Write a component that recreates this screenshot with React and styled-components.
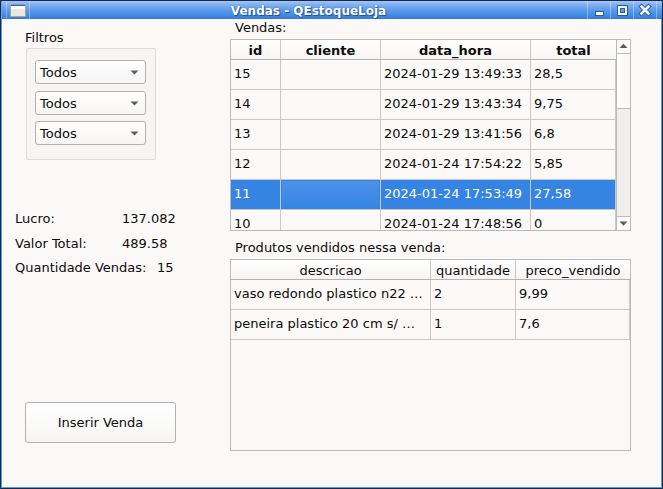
import React from 'react';
import styled, { createGlobalStyle } from 'styled-components';

const Global = createGlobalStyle`
  *, *::before, *::after { box-sizing: border-box; }
  body { margin: 0; background: #1b2c4c; font-family: "DejaVu Sans", sans-serif; font-size: 13px; color: #0c0c0c; overflow: hidden; }
`;

const Window = styled.div`
  width: 663px;
  height: 489px;
  display: flex;
  flex-direction: column;
  border: 1px solid #17294a;
  border-radius: 3px 3px 0 0;
  background: #faf9f7;
`;

const TitleBar = styled.header`
  flex: 0 0 18px;
  height: 18px;
  padding-left: 4px;
  display: flex;
  border-left: 1px solid #6aa5ec;
  background: linear-gradient(#a4c6f4 0, #7eaff0 4px, #5b9bea 9px, #4088e3 15px, #3a82de 17px, #2f73cd 18px);
  border-radius: 2px 2px 0 0;
`;

const TitleSlot = styled.div`
  flex: 0 0 ${(p) => p.$width}px;
  border-left: 1px solid #ffffff55;
  svg { display: block; }
`;

const TitleText = styled.h1`
  flex: 1;
  margin: 0;
  border-left: 1px solid #ffffff55;
  text-align: center;
  font-size: 12px;
  line-height: 20px;
  height: 18px;
  font-weight: bold;
  color: #fff;
  text-shadow: 0 0 1px #1d4e93, 1px 1px 1px #1d4e93;
  white-space: nowrap;
`;

const Body = styled.main`
  flex: 1;
  display: flex;
  border: solid #5b9be6;
  border-width: 0 1px 1px;
`;

const Sidebar = styled.section`
  width: 228px;
  display: flex;
  flex-direction: column;
  align-items: flex-start;
`;

const Label = styled.div`
  height: 17px;
  line-height: 17px;
  white-space: nowrap;
  margin: ${(p) => p.$margin || '0'};
`;

const FilterBox = styled.div`
  width: 130px;
  height: 112px;
  margin: 2px 0 0 24px;
  padding: 11px 0 0 8px;
  border: 1px solid #dddcda;
  border-radius: 2px;
  background: #f6f5f3;
`;

const Combo = styled.div`
  width: 111px;
  height: 24px;
  margin-bottom: ${(p) => p.$gap}px;
  padding: 1px 6px 0 4px;
  display: flex;
  align-items: center;
  justify-content: space-between;
  border: 1px solid #b1b1af;
  border-radius: 3px;
  background: linear-gradient(#fff, #f6f5f4);
  line-height: 23px;
`;

const Stats = styled.dl`
  margin: 50px 0 0 13px;
  display: flex;
  flex-direction: column;
`;

const Stat = styled.div`
  display: flex;
  height: ${(p) => p.$height}px;
  line-height: 17px;
  dt { width: ${(p) => p.$label}px; white-space: nowrap; }
  dd { margin: 0; }
`;

const Button = styled.button`
  width: 151px;
  height: 41px;
  margin: 118px 0 0 23px;
  padding: 0;
  border: 1px solid #b1b1af;
  border-radius: 3px;
  background: linear-gradient(#fff, #f6f5f4);
  font: inherit;
  color: inherit;
`;

const Content = styled.section`
  width: 401px;
`;

const TableFrame = styled.div`
  width: 401px;
  height: 192px;
  display: flex;
  overflow: hidden;
  border: 1px solid #bcbbb9;
`;

const Grid = styled.div`
  flex: none;
  width: ${(p) => p.$width}px;
`;

const Row = styled.div`
  display: grid;
  grid-template-columns: ${(p) => p.$columns};
  height: 30px;
  color: ${(p) => (p.$selected ? '#fff' : 'inherit')};
`;

const HeadRow = styled(Row)`
  height: 20px;
  font-weight: ${(p) => (p.$bold ? 'bold' : 'normal')};
  background: linear-gradient(#fff, #f6f5f4);
  border-bottom: 1px solid #b4b3b1;
`;

const HeadCell = styled.div`
  border-right: ${(p) => (p.$last ? '0' : '1px solid #c9c8c6')};
  text-align: center;
  line-height: 21px;
  height: 19px;
`;

const Cell = styled.div`
  border-right: 1px solid #c9c8c6;
  border-bottom: 1px solid #c9c8c6;
  padding-left: 3px;
  line-height: 28px;
  white-space: pre;
  background: ${(p) => (p.$focus ? 'linear-gradient(#4b92e9, #3584e4)' : p.$selected ? '#3584e4' : 'transparent')};
  background-clip: padding-box;
  box-shadow: ${(p) => (p.$focus ? 'inset 0 0 0 1px #3983dc' : 'none')};
`;

const ScrollBar = styled.div`
  width: 14px;
  display: flex;
  flex-direction: column;
  border-left: 1px solid #bcbbb9;
  background: #efefed;
`;

const ScrollButton = styled.div`
  flex: 0 0 14px;
  background: #fdfdfd;
  border: solid #bcbbb9;
  border-width: ${(p) => (p.$down ? '1px 0 0' : '0 0 1px')};
  svg { display: block; }
`;

const ScrollThumb = styled.div`
  height: 55px;
  background: linear-gradient(90deg, #fff, #f8f7f6);
  border-bottom: 1px solid #bcbbb9;
`;

const ScrollTrack = styled.div`
  flex: 1;
`;

const WindowIcon = () => (
  <svg width="20" height="18">
    <rect x="4" y="3" width="14" height="12" fill="#e9e9e4" />
    <path d="M3.5 4v11.5h15V4" fill="none" stroke="#a9a89c" />
    <path d="M4 3h14v1H4z" fill="#7f9cc8" />
    <path d="M4 4h14v1H4z" fill="#3466ad" />
    <path d="M4 5h14v3H4z" fill="#fbfbfa" />
  </svg>
);

const MinimizeIcon = () => (
  <svg width="22" height="18">
    <rect x="7" y="10" width="9" height="5" fill="#245da8" />
    <rect x="8" y="11" width="7" height="3" fill="#fff" />
  </svg>
);

const MaximizeIcon = () => (
  <svg width="22" height="18">
    <rect x="6.5" y="4.5" width="10" height="10" fill="none" stroke="#245da8" />
    <rect x="8" y="6" width="7" height="7" fill="none" stroke="#fff" strokeWidth="2" />
    <rect x="9.5" y="7.5" width="4" height="4" fill="none" stroke="#245da8" />
  </svg>
);

const CloseIcon = () => (
  <svg width="22" height="18">
    <path d="M7.5 5.5l7 7M14.5 5.5l-7 7" stroke="#245da8" strokeWidth="4.4" strokeLinecap="square" />
    <path d="M7.5 5.5l7 7M14.5 5.5l-7 7" stroke="#fff" strokeWidth="2.6" strokeLinecap="square" />
  </svg>
);

const ComboArrow = () => (
  <svg width="9" height="5">
    <path d="M.5 .4h8L4.5 4.6z" fill="#5d5d5b" />
  </svg>
);

const ScrollArrow = ({ down }) => (
  <svg width="13" height="13">
    <path d={down ? 'M2.5 4.5h8l-4 4.2z' : 'M2.5 8h8l-4-4.2z'} fill="#5d5d5b" />
  </svg>
);

const salesColumns = '50px 100px 150px 85px';
const sales = [
  ['15', '', '2024-01-29 13:49:33', '28,5'],
  ['14', '', '2024-01-29 13:43:34', '9,75'],
  ['13', '', '2024-01-29 13:41:56', '6,8'],
  ['12', '', '2024-01-24 17:54:22', '5,85'],
  ['11', '', '2024-01-24 17:53:49', '27,58'],
  ['10', '', '2024-01-24 17:48:56', '0'],
];

const productColumns = '200px 85px 114px';
const products = [
  ['vaso redondo plastico n22 …', '2', '9,99'],
  ['peneira plastico 20 cm s/ …', '1', '7,6'],
];

function Table({ width, columns, heads, rows, bold, selectedId }) {
  return (
    <Grid $width={width}>
      <HeadRow $columns={columns} $bold={bold}>
        {heads.map((h, i) => (
          <HeadCell key={h} $last={i === heads.length - 1}>{h}</HeadCell>
        ))}
      </HeadRow>
      {rows.map((row) => {
        const selected = row[0] === selectedId;
        return (
          <Row key={row[0]} $columns={columns} $selected={selected}>
            {row.map((value, i) => (
              <Cell key={i} $selected={selected} $focus={selected && i === 1}>{value}</Cell>
            ))}
          </Row>
        );
      })}
    </Grid>
  );
}

export default function App() {
  return (
    <>
      <Global />
      <Window>
        <TitleBar>
          <TitleSlot $width={23}><WindowIcon /></TitleSlot>
          <TitleText>Vendas - QEstoqueLoja</TitleText>
          <TitleSlot $width={23}><MinimizeIcon /></TitleSlot>
          <TitleSlot $width={23}><MaximizeIcon /></TitleSlot>
          <TitleSlot $width={23}><CloseIcon /></TitleSlot>
          <TitleSlot $width={6} />
        </TitleBar>
        <Body>
          <Sidebar>
            <Label $margin="10px 0 0 23px">Filtros</Label>
            <FilterBox>
              <Combo $gap={7}>Todos<ComboArrow /></Combo>
              <Combo $gap={6}>Todos<ComboArrow /></Combo>
              <Combo $gap={0}>Todos<ComboArrow /></Combo>
            </FilterBox>
            <Stats>
              <Stat $height={25} $label={107}><dt>Lucro:</dt><dd>137.082</dd></Stat>
              <Stat $height={24} $label={107}><dt>Valor Total:</dt><dd>489.58</dd></Stat>
              <Stat $height={25} $label={142}><dt>Quantidade Vendas:</dt><dd>15</dd></Stat>
            </Stats>
            <Button>Inserir Venda</Button>
          </Sidebar>
          <Content>
            <Label $margin="0 0 3px 5px">Vendas:</Label>
            <TableFrame>
              <Table
                width={385}
                columns={salesColumns}
                heads={['id', 'cliente', 'data_hora', 'total']}
                rows={sales}
                selectedId="11"
                bold
              />
              <ScrollBar>
                <ScrollButton><ScrollArrow /></ScrollButton>
                <ScrollThumb />
                <ScrollTrack />
                <ScrollButton $down><ScrollArrow down /></ScrollButton>
              </ScrollBar>
            </TableFrame>
            <Label $margin="8px 0 3px 5px">Produtos vendidos nessa venda:</Label>
            <TableFrame>
              <Table
                width={399}
                columns={productColumns}
                heads={['descricao', 'quantidade', 'preco_vendido']}
                rows={products}
              />
            </TableFrame>
          </Content>
        </Body>
      </Window>
    </>
  );
}
